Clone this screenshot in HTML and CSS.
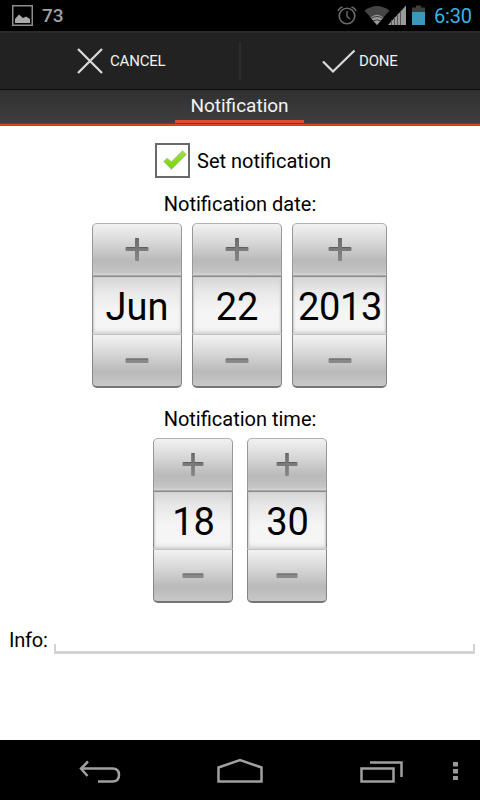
FILE: index.html
```html
<!DOCTYPE html>
<html lang="en">
<head>
    <meta charset="UTF-8">
    <meta name="viewport" content="width=device-width, initial-scale=1.0">
    <title>Notification</title>
    <link rel="stylesheet" href="styles.css">
</head>
<body>
    <svg width="0" height="0" class="symbols">
        <defs>
            <linearGradient id="glyph" x1="0" y1="0" x2="0" y2="1">
                <stop offset="0" stop-color="#6c6c6c"/>
                <stop offset="1" stop-color="#868686"/>
            </linearGradient>
            <linearGradient id="green" x1="0" y1="0" x2="0" y2="1">
                <stop offset="0" stop-color="#a0e62c"/>
                <stop offset="1" stop-color="#74d010"/>
            </linearGradient>
        </defs>
        <symbol id="plus" viewBox="0 0 24 24" preserveAspectRatio="none">
            <path d="M11 1h2q1 0 1 1v8h8.500q1 0 1 1v2q0 1-1 1H14v9q0 1-1 1h-2q-1 0-1-1v-9H1.500q-1 0-1-1v-2q0-1 1-1H10V2q0-1 1-1z" fill="url(#glyph)"/>
            <path d="M1.500 10.500H10M10.500 1.500h3M14 10.500h8.500" stroke="#5e5e5e" fill="none"/>
        </symbol>
        <symbol id="minus" viewBox="0 0 24 6" preserveAspectRatio="none">
            <rect x="0.500" y="0.500" width="23" height="4.500" rx="1" fill="#888"/>
            <path d="M1 1h22" stroke="#666"/>
        </symbol>
    </svg>

    <!-- Status bar -->
    <div class="status-bar">
        <svg class="picture-icon" width="21" height="21" viewBox="0 0 21 21">
            <rect x="0.750" y="0.750" width="19.500" height="19.500" fill="none" stroke="#8c8c8c" stroke-width="1.500"/>
            <path d="M3 18v-4l4-4.500 4 3.500 3-1.500 4 2.500v4z" fill="#aaa"/>
        </svg>
        <span class="battery-level">73</span>
        <div class="status-icons">
            <svg class="alarm-icon" width="20" height="20" viewBox="0 0 20 20" fill="none" stroke="#6c6c6c">
                <circle cx="10" cy="11" r="7.800" stroke-width="1.600"/>
                <path d="M10 6v5.500l3 2.500" stroke-width="1.400"/>
                <path d="M1 6q1-3 4.500-4M19 6q-1-3-4.500-4" stroke-width="1.400"/>
            </svg>
            <svg class="wifi-icon" width="26" height="20" viewBox="0 0 26 20">
                <path d="M0.500 5.500Q13-3.500 25.500 5.500L13 20z" fill="#444"/>
                <path d="M6.500 12.500q6.500-5.500 13 0L13 20z" fill="#9a9a9a"/>
                <path d="M7 13.500q6-4 12 0M9 16q4-2.500 8 0" stroke="#3a3a3a" fill="none"/>
            </svg>
            <svg class="signal-icon" width="19" height="20" viewBox="0 0 19 20">
                <path d="M0 20L18 0.500V20z" fill="#9a9a9a"/>
                <path d="M3.500 15v5M6.500 12v8M9.500 9v11M12.500 6v14" stroke="#555"/>
            </svg>
            <svg class="battery-icon" width="13" height="20" viewBox="0 0 13 20">
                <path d="M0 2.500h4V0.500h5v2h4V7H0z" fill="#3e3e3e"/>
                <rect y="7" width="13" height="13" fill="#3d97ba"/>
            </svg>
        </div>
        <span class="clock">6:30</span>
    </div>

    <!-- Cancel / done -->
    <div class="action-bar">
        <div class="action cancel">
            <svg width="26" height="26" viewBox="0 0 26 26">
                <path d="M1 1l24 24M25 1L1 25" stroke="#d8d8d8" stroke-width="2.300"/>
            </svg>
            <span class="action-label">CANCEL</span>
        </div>
        <div class="divider"></div>
        <div class="action done">
            <svg width="34" height="25" viewBox="0 0 34 25">
                <path d="M1 12.500L11 22.500L32.500 1.500" fill="none" stroke="#d8d8d8" stroke-width="2.300"/>
            </svg>
            <span class="action-label">DONE</span>
        </div>
    </div>

    <div class="tab-bar">
        <div class="tab"><span class="tab-label">Notification</span></div>
    </div>

    <div class="content">
        <div class="check-row">
            <div class="checkbox">
                <svg width="26" height="23" viewBox="0 0 26 23">
                    <path d="M1.500 12.500L5 9L9.500 12.500L20.500 1.500L24.500 5.500L9.500 20.500z" fill="url(#green)" stroke="#c3ccb8" stroke-width="1" stroke-linejoin="round"/>
                </svg>
            </div>
            <span class="text check-label">Set notification</span>
        </div>

        <div class="text heading date-heading"><span>Notification date:</span></div>
        <div class="pickers date-pickers">
            <div class="picker">
                <div class="picker-button up"><svg class="plus"><use href="#plus"/></svg></div>
                <div class="picker-value"><span>Jun</span></div>
                <div class="picker-button down"><svg class="minus"><use href="#minus"/></svg></div>
            </div>
            <div class="picker">
                <div class="picker-button up"><svg class="plus"><use href="#plus"/></svg></div>
                <div class="picker-value"><span>22</span></div>
                <div class="picker-button down"><svg class="minus"><use href="#minus"/></svg></div>
            </div>
            <div class="picker year">
                <div class="picker-button up"><svg class="plus"><use href="#plus"/></svg></div>
                <div class="picker-value"><span>2013</span></div>
                <div class="picker-button down"><svg class="minus"><use href="#minus"/></svg></div>
            </div>
        </div>

        <div class="text heading time-heading"><span>Notification time:</span></div>
        <div class="pickers time-pickers">
            <div class="picker">
                <div class="picker-button up"><svg class="plus"><use href="#plus"/></svg></div>
                <div class="picker-value"><span>18</span></div>
                <div class="picker-button down"><svg class="minus"><use href="#minus"/></svg></div>
            </div>
            <div class="picker">
                <div class="picker-button up"><svg class="plus"><use href="#plus"/></svg></div>
                <div class="picker-value"><span>30</span></div>
                <div class="picker-button down"><svg class="minus"><use href="#minus"/></svg></div>
            </div>
        </div>

        <div class="info-row">
            <span class="text">Info:</span>
            <div class="info-input"></div>
        </div>
    </div>

    <!-- Navigation buttons -->
    <div class="nav-bar">
        <svg class="nav-back" width="43" height="24" viewBox="0 0 43 24" fill="none" stroke="#a0a0a0" stroke-width="2.500">
            <path d="M2 8.500h31.500q6.500 0 6.500 6.500t-6.500 6.500H19"/>
            <path d="M9 1.500L2 8.500l6.500 7.500"/>
        </svg>
        <svg class="nav-home" width="46" height="25" viewBox="0 0 46 25" fill="none" stroke="#a0a0a0" stroke-width="2.500">
            <path d="M1.500 9.500L23 2L44.500 9.500v14h-43z"/>
        </svg>
        <svg class="nav-recent" width="43" height="22" viewBox="0 0 43 22" fill="none" stroke="#a0a0a0" stroke-width="2.500">
            <path d="M10 1.500h31.500V16"/>
            <rect x="1.500" y="7.500" width="32" height="13"/>
        </svg>
        <svg class="nav-menu" width="5" height="18" viewBox="0 0 5 18" fill="#999">
            <rect width="5" height="4.500"/>
            <rect y="7" width="5" height="4.500"/>
            <rect y="14" width="5" height="4"/>
        </svg>
    </div>
</body>
</html>
```

FILE: styles.css
```css
* {
    margin: 0;
    padding: 0;
    box-sizing: border-box;
}

body {
    width: 480px;
    height: 800px;
    overflow: hidden;
    display: flex;
    flex-direction: column;
    background-color: #fff;
    font-family: Roboto, sans-serif;
}

svg {
    display: block;
    flex: none;
}

span {
    white-space: nowrap;
}

.symbols {
    position: absolute;
}

/* Status bar */
.status-bar {
    display: flex;
    height: 31px;
    padding-left: 12px;
    background-color: #000;
}

.picture-icon {
    margin-top: 5px;
}

.battery-level {
    width: 28px;
    margin-left: 9px;
    color: #a2a2a2;
    font-size: 19px;
    font-weight: 500;
    line-height: 32px;
}

.status-icons {
    display: flex;
    margin: 5px 0 0 267px;
}

.wifi-icon {
    margin-left: 7px;
}

.signal-icon {
    margin-left: -2px;
}

.battery-icon {
    margin-left: 5px;
}

.clock {
    margin-left: 9px;
    color: #33b5e5;
    font-size: 20px;
    line-height: 32px;
    letter-spacing: -0.2px;
}

/* Action bar */
.action-bar {
    display: flex;
    align-items: center;
    height: 59px;
    background-color: #222;
    border-top: 2px solid #2b2b2b;
    border-bottom: 1px solid #101010;
}

.action {
    display: flex;
    align-items: center;
}

.cancel {
    width: 239px;
    padding-left: 77px;
    gap: 7px;
}

.done {
    padding-left: 81px;
    gap: 3px;
}

.divider {
    width: 2px;
    height: 38px;
    background-color: #2c2c2c;
}

.action-label {
    color: #f0f0f0;
    font-size: 15px;
    letter-spacing: -0.2px;
}

/* Tabs */
.tab-bar {
    display: flex;
    justify-content: center;
    height: 36px;
    padding-right: 1px;
    background: linear-gradient(#303030, #3f3f3f);
    border-bottom: 2px solid #dd3f22;
    box-shadow: inset 0 -1px #873629;
}

.tab {
    width: 129px;
    height: 33px;
    border-bottom: 3px solid #dc4d37;
    text-align: center;
}

.tab-label {
    color: #f4f4f4;
    font-size: 19px;
    line-height: 32px;
}

/* Form */
.content {
    height: 614px;
}

.text {
    color: #000;
    font-size: 20px;
    line-height: 24px;
}

.check-row {
    display: flex;
    align-items: center;
    padding: 17px 0 0 155px;
    gap: 7px;
}

.checkbox {
    display: flex;
    width: 35px;
    height: 35px;
    padding: 4px 0 0 5px;
    border: 2px solid #6a6a6a;
}

.heading {
    text-align: center;
}

.date-heading {
    margin-top: 14px;
}

.time-heading {
    margin-top: 19px;
}

.pickers {
    display: flex;
    justify-content: center;
}

.date-pickers {
    gap: 10px;
    margin-top: 7px;
    padding-right: 1px;
}

.time-pickers {
    gap: 14px;
    margin-top: 7px;
}

.picker {
    width: 90px;
    height: 165px;
}

.year {
    width: 95px;
}

.time-pickers .picker {
    width: 80px;
}

.picker-button {
    display: flex;
    justify-content: center;
    border: 1px solid #999;
}

.up {
    height: 53px;
    padding-top: 13px;
    background: linear-gradient(#f2f2f2, #d8d8d8 35%, #b9b9b9 72%, #c4c4c4 94%, #d4d4d4);
    border-color: #b2b2b2 #989898 #aaa;
    border-radius: 5px 5px 0 0;
}

.down {
    height: 54px;
    padding-top: 23px;
    background: linear-gradient(#f2f2f2, #d8d8d8 35%, #b9b9b9 72%, #c8c8c8);
    border-color: #c0c0c0 #858585 #757575;
    border-bottom-width: 2px;
    border-radius: 0 0 5px 5px;
}

.picker-value {
    height: 58px;
    border: 1px solid #8c8c8c;
    border-bottom-color: #d8d8d8;
    background: linear-gradient(#d5d5d5, #e8e8e8 25%, #f5f5f5 60%, #f5f5f5 90%, #e4e4e4);
    box-shadow: inset 1px 0 2px #ccc, inset -1px 0 2px #ccc;
    font-size: 38px;
    line-height: 61px;
    text-align: center;
}

.year .picker-value {
    padding-left: 1px;
    letter-spacing: -0.3px;
}

.time-pickers .picker-value {
    padding-left: 1px;
}

.plus {
    width: 24px;
    height: 24px;
}

.minus {
    width: 24px;
    height: 6px;
}

.time-pickers .plus,
.time-pickers .minus {
    width: 22px;
}

/* Info field */
.info-row {
    display: flex;
    margin-top: 25px;
    padding-left: 9px;
}

.info-row .text {
    letter-spacing: -0.2px;
}

.info-input {
    width: 421px;
    height: 10px;
    margin: 16px 5px 0 auto;
    border: solid #d3d3d3;
    border-width: 0 2px 3px;
}

/* Navigation bar */
.nav-bar {
    display: flex;
    height: 60px;
    background-color: #000;
}

.nav-back {
    margin: 20px 0 0 79px;
}

.nav-home {
    margin: 18px 0 0 95px;
}

.nav-recent {
    margin: 21px 0 0 97px;
}

.nav-menu {
    margin: 22px 0 0 50px;
}
```
